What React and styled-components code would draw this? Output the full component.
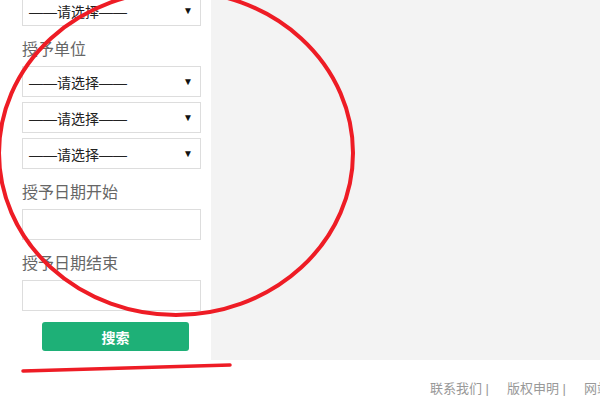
import React from 'react';
import styled, { createGlobalStyle } from 'styled-components';

const GlobalStyle = createGlobalStyle`
  html, body {
    margin: 0;
    padding: 0;
    background: #fff;
    font-family: "Liberation Sans", "Noto Sans CJK SC", sans-serif;
    overflow: hidden;
  }
`;

const Page = styled.div`
  position: relative;
  width: 600px;
  height: 400px;
  overflow: hidden;
`;

const Top = styled.div`
  display: flex;
  height: 360px;
  overflow: hidden;
`;

const Sidebar = styled.div`
  width: 211px;
  flex-shrink: 0;
  background: #fff;
  box-sizing: border-box;
  padding-left: 22px;
`;

const Form = styled.div`
  width: 179px;
  margin-top: -5px;
  display: flex;
  flex-direction: column;
`;

const Main = styled.div`
  flex: 1;
  background: #f3f3f3;
`;

const Label = styled.div`
  margin: 12px 0 4px;
  font-size: 16px;
  line-height: 24px;
  color: #666;
`;

const SelectBox = styled.div`
  box-sizing: border-box;
  height: 31px;
  border: 1px solid #ddd;
  display: flex;
  align-items: center;
  justify-content: space-between;
  padding: 0 7px 0 6px;
  font-size: 14px;
  color: #222;
  & + & {
    margin-top: 5px;
  }
`;

const Arrow = styled.span`
  font-size: 10px;
  color: #111;
`;

const TextInput = styled.div`
  box-sizing: border-box;
  height: 31px;
  border: 1px solid #ddd;
  background: #fff;
`;

const SearchButton = styled.button`
  margin: 11px 0 0 20px;
  width: 147px;
  height: 29px;
  border: none;
  border-radius: 3px;
  background: #1eb077;
  color: #fff;
  font-family: inherit;
  font-size: 14px;
  font-weight: bold;
`;

const Footer = styled.div`
  display: flex;
  align-items: center;
  height: 40px;
  box-sizing: border-box;
  padding: 14px 0 0 430px;
  white-space: nowrap;
  font-size: 13px;
  color: #999;
`;

const FooterLink = styled.span`
  margin-right: 18px;
`;

const Marks = styled.svg`
  position: absolute;
  left: 0;
  top: 0;
  pointer-events: none;
`;

function Select() {
  return (
    <SelectBox>
      <span>——请选择——</span>
      <Arrow>▼</Arrow>
    </SelectBox>
  );
}

export default function App() {
  return (
    <Page>
      <GlobalStyle />
      <Top>
        <Sidebar>
          <Form>
            <Select />
            <Label>授予单位</Label>
            <Select />
            <Select />
            <Select />
            <Label>授予日期开始</Label>
            <TextInput />
            <Label>授予日期结束</Label>
            <TextInput />
            <SearchButton>搜索</SearchButton>
          </Form>
        </Sidebar>
        <Main />
      </Top>
      <Footer>
        <FooterLink>联系我们 |</FooterLink>
        <FooterLink>版权申明 |</FooterLink>
        <FooterLink>网站</FooterLink>
      </Footer>
      <Marks width="600" height="400" viewBox="0 0 600 400">
        <ellipse cx="176" cy="153" rx="177" ry="162" fill="none" stroke="#ee1c25" strokeWidth="4" />
        <path d="M23 371 Q120 368 230 365" fill="none" stroke="#ee1c25" strokeWidth="3.5" strokeLinecap="round" />
      </Marks>
    </Page>
  );
}
